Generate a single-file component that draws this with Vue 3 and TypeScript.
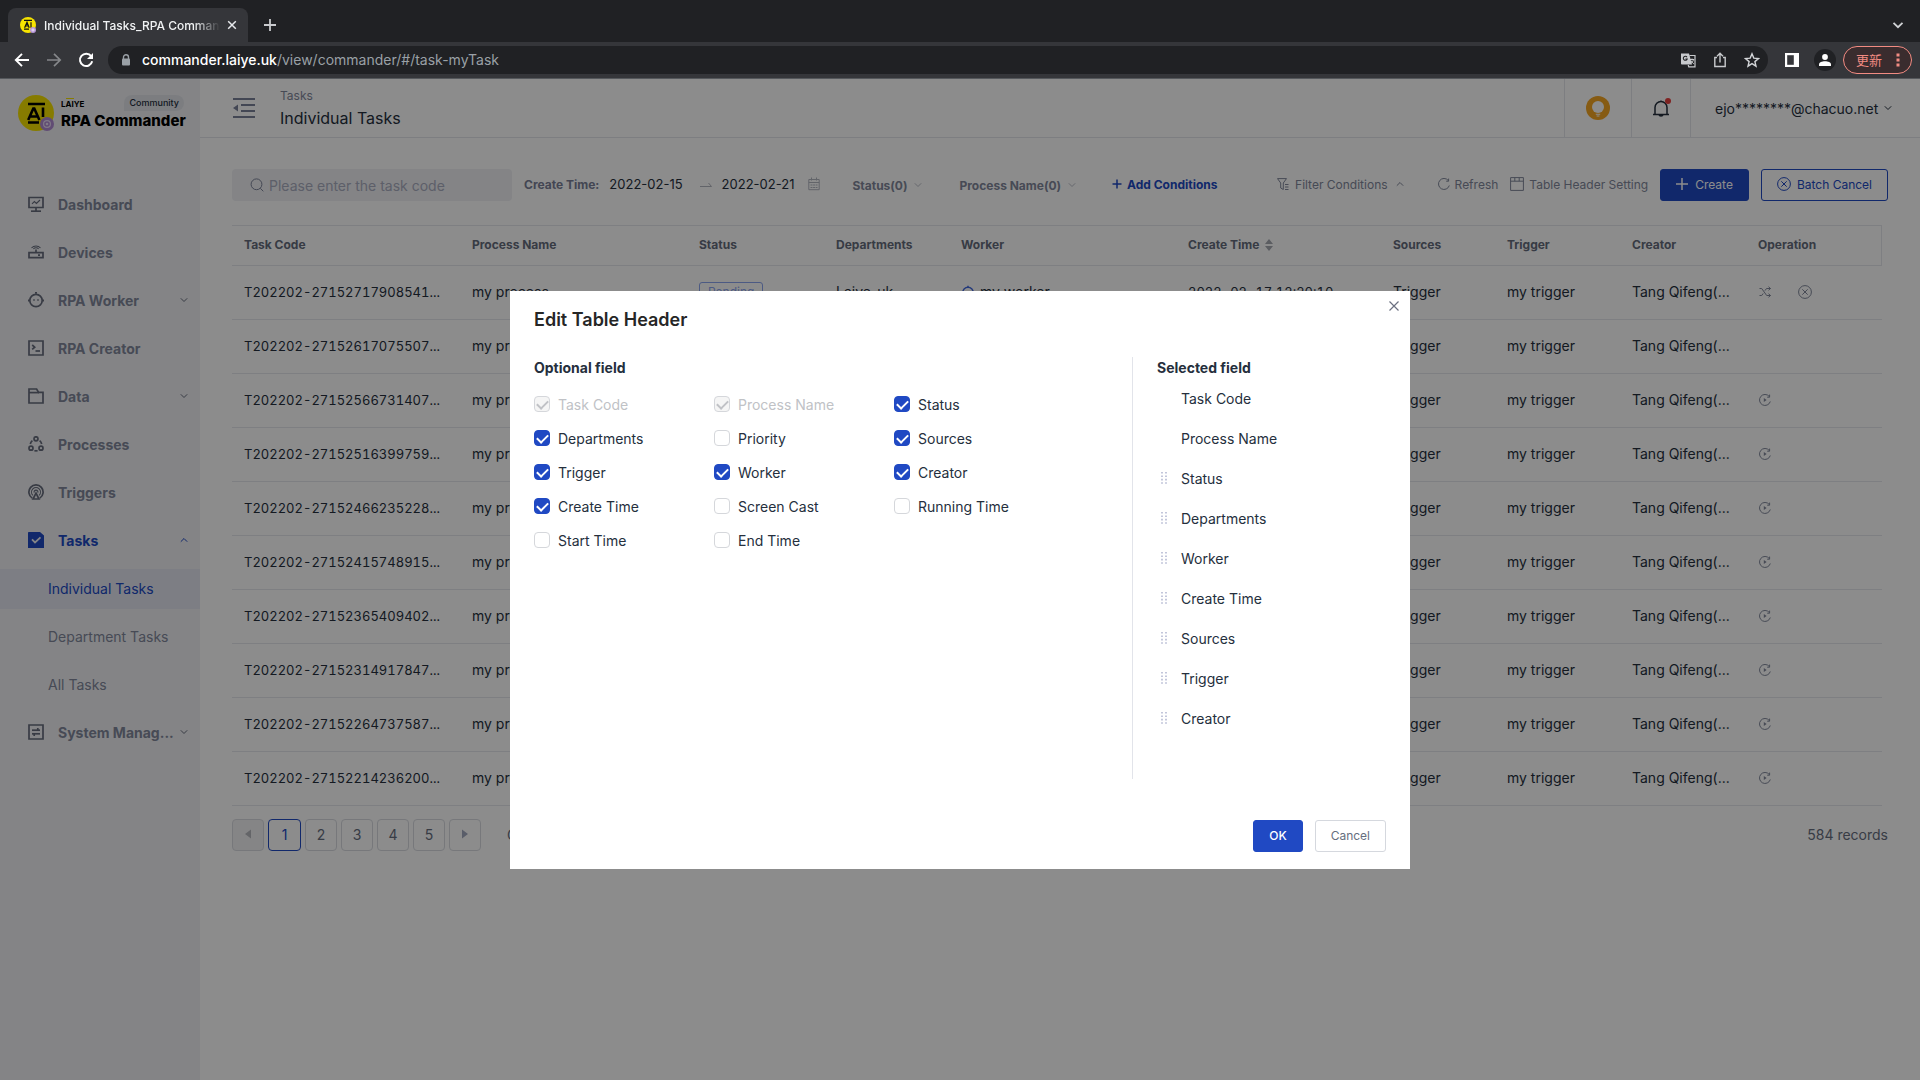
<script setup lang="ts">
import { ref } from 'vue'

interface MenuItem {
  label: string
  icon: string[]
  thin?: string[]
  arrow?: 'down' | 'up'
  active?: boolean
  children?: { label: string; active?: boolean }[]
}

const menu: MenuItem[] = [
  { label: 'Dashboard', icon: ['M1 1.5h14v10H1z', 'M8 12v3', 'M3 15.2h10'], thin: ['M4 7.8l2.4-2.2 2 1.8L12 4'] },
  { label: 'Devices', icon: ['M1 8.6h14v5H1z', 'M8 5.5v3', 'M10 11.2h2'], thin: ['M3.5 4a6 6 0 0 1 9 0', 'M5.4 5a3.4 3.4 0 0 1 5.2 0'] },
  { label: 'RPA Worker', icon: ['M8 2.3a6.2 6.2 0 1 1 0 12.4A6.2 6.2 0 0 1 8 2.3z', 'M7 .8h2', 'M.6 7.5v2', 'M15.4 7.5v2'], thin: ['M6 7v2', 'M10 7v2'], arrow: 'down' },
  { label: 'RPA Creator', icon: ['M1 1h14v14H1z', 'M4.2 5l2.5 2.2L4.2 9.4', 'M7.5 11h4.5'] },
  { label: 'Data', icon: ['M1 15V1h7.6l2 3.4H15V15z', 'M1 4.6h10'], arrow: 'down' },
  {
    label: 'Processes',
    icon: ['M8 .8a2 2 0 1 1 0 4 2 2 0 0 1 0-4z', 'M3 10.2a2 2 0 1 1 0 4 2 2 0 0 1 0-4z', 'M13 10.2a2 2 0 1 1 0 4 2 2 0 0 1 0-4z', 'M4.4 4.6A6 6 0 0 0 2.3 8', 'M11.6 4.6A6 6 0 0 1 13.7 8', 'M6.4 14.8h3.2'],
  },
  {
    label: 'Triggers',
    icon: ['M4.2 14A7.1 7.1 0 1 1 11.8 14', 'M8 9.2l-3 5.8h6z'],
    thin: ['M4.8 11.3a4.5 4.5 0 1 1 6.4 0', 'M6.2 8.6a1.9 1.9 0 1 1 3.6 0'],
  },
  {
    label: 'Tasks',
    icon: [],
    arrow: 'up',
    active: true,
    children: [{ label: 'Individual Tasks', active: true }, { label: 'Department Tasks' }, { label: 'All Tasks' }],
  },
  { label: 'System Manag...', icon: ['M1 1h14v14H1z', 'M4 6.2h8', 'M9.8 4v2.2', 'M4 9.8h8', 'M6.2 9.8v2.2'], arrow: 'down' },
]

const columns = [
  { key: 'code', label: 'Task Code', width: 228 },
  { key: 'process', label: 'Process Name', width: 227 },
  { key: 'status', label: 'Status', width: 137 },
  { key: 'dept', label: 'Departments', width: 125 },
  { key: 'worker', label: 'Worker', width: 227 },
  { key: 'time', label: 'Create Time', width: 205 },
  { key: 'source', label: 'Sources', width: 114 },
  { key: 'trigger', label: 'Trigger', width: 125 },
  { key: 'creator', label: 'Creator', width: 126 },
  { key: 'operation', label: 'Operation', width: 136 },
]

type Operation = 'pending' | 'none' | 'rerun'
const codes = [
  '27152717908541', '27152617075507', '27152566731407', '27152516399759', '27152466235228',
  '27152415748915', '27152365409402', '27152314917847', '27152264737587', '27152214236200',
]
const rows = codes.map((code, i) => ({
  code: `T202202-${code}...`,
  pending: i === 0,
  operation: (i === 0 ? 'pending' : i === 1 ? 'none' : 'rerun') as Operation,
}))

const fields = ref([
  { name: 'Task Code', checked: true, locked: true },
  { name: 'Process Name', checked: true, locked: true },
  { name: 'Status', checked: true, locked: false },
  { name: 'Departments', checked: true, locked: false },
  { name: 'Priority', checked: false, locked: false },
  { name: 'Sources', checked: true, locked: false },
  { name: 'Trigger', checked: true, locked: false },
  { name: 'Worker', checked: true, locked: false },
  { name: 'Creator', checked: true, locked: false },
  { name: 'Create Time', checked: true, locked: false },
  { name: 'Screen Cast', checked: false, locked: false },
  { name: 'Running Time', checked: false, locked: false },
  { name: 'Start Time', checked: false, locked: false },
  { name: 'End Time', checked: false, locked: false },
])

const selected = ['Task Code', 'Process Name', 'Status', 'Departments', 'Worker', 'Create Time', 'Sources', 'Trigger', 'Creator']
const pages = [1, 2, 3, 4, 5]
const keyword = ref('')
</script>

<template>
  <div class="window">
    <header class="browser">
      <div class="tabs">
        <div class="tab">
          <svg class="i16" viewBox="0 0 16 16"><circle cx="8" cy="8" r="8" fill="#f7e400" /><path d="M4 3.4h8M4 12.2h5M4.6 10.8L7 5.4l2.2 5.4M5.4 9h3M11 5.2v5.6" stroke="#111" stroke-width="1.2" fill="none" /><circle cx="13" cy="13" r="3" fill="#b796d8" /><circle cx="13" cy="13" r="1.1" fill="none" stroke="#fff" stroke-width=".7" /></svg>
          <span class="tab-title">Individual Tasks_RPA Commander</span>
          <button class="bare" aria-label="Close tab"><svg class="i12" viewBox="0 0 12 12"><path d="M2.2 2.2l7.6 7.6M9.8 2.2L2.2 9.8" stroke="#e8eaed" stroke-width="1.5" /></svg></button>
        </div>
        <button class="bare new-tab" aria-label="New tab"><svg class="i12" viewBox="0 0 12 12"><path d="M6 0v12M0 6h12" stroke="#c9cbce" stroke-width="1.8" /></svg></button>
        <button class="bare tab-search" aria-label="Search tabs"><svg class="i12" viewBox="0 0 12 12"><path d="M1.5 3.8L6 8.2l4.5-4.4" stroke="#d0d2d5" stroke-width="1.8" fill="none" /></svg></button>
      </div>
      <div class="toolbar">
        <button class="bare" aria-label="Back"><svg class="i16" viewBox="0 0 16 16"><path d="M15 8H2M8 1.8L1.8 8 8 14.2" stroke="#fff" stroke-width="1.9" fill="none" /></svg></button>
        <button class="bare" aria-label="Forward"><svg class="i16" viewBox="0 0 16 16"><path d="M1 8h13M8 1.8L14.2 8 8 14.2" stroke="#85878a" stroke-width="1.7" fill="none" /></svg></button>
        <button class="bare" aria-label="Reload"><svg class="i16" viewBox="0 0 16 16"><path d="M13.2 4.2A6.2 6.2 0 1 0 14.2 9.3" stroke="#fff" stroke-width="2" fill="none" /><path d="M15 1v6H9z" fill="#fff" /></svg></button>
        <div class="address">
          <svg class="lock" viewBox="0 0 10 12"><path d="M2.5 5V3.2a2.5 2.5 0 0 1 5 0V5" stroke="#9aa0a6" stroke-width="1.4" fill="none" /><rect x="1" y="4.6" width="8" height="7" rx="1" fill="#9aa0a6" /></svg>
          <span class="url"><b>commander.laiye.uk</b>/view/commander/#/task-myTask</span>
          <span class="address-icons">
            <svg class="i16" viewBox="0 0 16 16"><path d="M1 1.5h8l3 11H1.8a.8.8 0 0 1-.8-.8z" fill="#c8cacd" /><path d="M9.5 3.5H15v11.3H8.8L8.2 13" stroke="#c8cacd" stroke-width="1.2" fill="none" /><path d="M7 5.2a2 2 0 1 0 .2 1.8H5.4" stroke="#202124" stroke-width="1.1" fill="none" /><path d="M9.8 7.5h4.4M12 6.5v1M13.5 7.5c-.3 1.8-1.5 3-2.7 4M11 8.5c.5 1.3 1.7 2.5 2.8 3.3" stroke="#c8cacd" fill="none" /></svg>
            <svg class="i16" viewBox="0 0 16 16"><path d="M5 5.5H2.8v9h10.4v-9H11M8 10.5V1.5M5 4.2l3-3 3 3" stroke="#c8cacd" stroke-width="1.4" fill="none" /></svg>
            <svg class="i16" viewBox="0 0 16 16"><path d="M8 1.8l1.8 4.3 4.7.4-3.6 3.1 1.1 4.6L8 11.7l-4 2.5 1.1-4.6L1.5 6.5l4.7-.4z" stroke="#d4d6d9" stroke-width="1.4" fill="none" /></svg>
          </span>
        </div>
        <button class="bare panel" aria-label="Side panel"><svg class="i16" viewBox="0 0 16 16"><path d="M1 1h14v14H1z" fill="#fff" /><path d="M3.2 3.2h6.6v9.6H3.2z" fill="#35363a" /></svg></button>
        <button class="bare avatar" aria-label="Profile"><svg class="i12" viewBox="0 0 12 12"><circle cx="6" cy="3" r="2.9" fill="#fff" /><path d="M0 12V10.5C0 8.3 3 7.3 6 7.3s6 1 6 3.2V12z" fill="#fff" /></svg></button>
        <button class="update">更新<svg class="dots" viewBox="0 0 4 14"><path d="M.5.5h3v3h-3zM.5 5.5h3v3h-3zM.5 10.5h3v3h-3z" fill="#f28b82" /></svg></button>
      </div>
    </header>

    <div class="page">
      <aside class="sidebar">
        <div class="logo">
          <svg class="logo-mark" viewBox="0 0 36 36"><circle cx="18" cy="18" r="18" fill="#f5e100" /><path d="M10 9h17M10 27.5h11" stroke="#000" stroke-width="2.6" /><path d="M10.2 25L15.3 13.5h1L21.4 25M12.2 21.5h7.2M25 12.5V22" stroke="#000" stroke-width="2.6" fill="none" /><circle cx="29" cy="29" r="7" fill="#b18bd3" /><circle cx="29" cy="29" r="3.4" stroke="#e9dcf5" stroke-width="1.2" fill="none" /><circle cx="29" cy="29" r="1.3" fill="#e9dcf5" /></svg>
          <div class="logo-text">
            <div class="logo-top"><span class="laiye">L<i>AI</i>YE</span><span class="edition">Community</span></div>
            <strong class="product">RPA Commander</strong>
          </div>
        </div>
        <nav class="menu">
          <template v-for="item in menu" :key="item.label">
            <a href="#" class="menu-item" :class="{ active: item.active }">
              <svg v-if="item.active" class="i16" viewBox="0 0 16 16"><path d="M0 .8A.8.8 0 0 1 .8 0H12l4 3.6V16H0z" fill="#2049c3" /><path d="M4 7.4l3 3 5.5-5" stroke="#f0f1f5" stroke-width="1.8" fill="none" /></svg>
              <svg v-else class="i16" viewBox="0 0 16 16" fill="none" stroke="currentColor">
                <path v-for="d in item.icon" :key="d" :d="d" stroke-width="1.7" />
                <path v-for="d in item.thin" :key="d" :d="d" stroke-width="1.1" />
              </svg>
              <span class="menu-label">{{ item.label }}</span>
              <svg v-if="item.arrow" class="chev" :class="item.arrow" viewBox="0 0 8 8"><path d="M.8 2.3L4 5.5l3.2-3.2" /></svg>
            </a>
            <a v-for="child in item.children" :key="child.label" href="#" class="submenu-item" :class="{ active: child.active }">{{ child.label }}</a>
          </template>
        </nav>
      </aside>

      <main class="main">
        <header class="topbar">
          <button class="bare fold" aria-label="Collapse menu"><svg viewBox="0 0 22 20"><path d="M0 1h22M8 7h14M8 13h14M0 19h22" stroke="#7b829a" stroke-width="1.8" /><path d="M5 6.5v7L0 10z" fill="#7b829a" /></svg></button>
          <div class="crumbs"><span class="crumb">Tasks</span><h1>Individual Tasks</h1></div>
          <div class="top-cell tips"><svg viewBox="0 0 24 24"><circle cx="12" cy="12" r="12" fill="#f5a623" /><circle cx="12" cy="11" r="6" fill="#fff" /><path d="M9.8 17.8h4.4v1H9.8zM10.6 19.6h2.8v1h-2.8z" fill="#fff" /></svg></div>
          <div class="top-cell bell"><svg viewBox="0 0 20 20"><path d="M2 16.5h16M4 16.5V9.5a6 6 0 0 1 12 0v7M10 3.5v-1" stroke="#252f3d" stroke-width="1.5" fill="none" /><path d="M7.5 17h5a2.5 1.8 0 0 1-5 0z" fill="#252f3d" /><circle cx="17" cy="3" r="3" fill="#e8403f" /></svg></div>
          <button class="bare account">ejo********@chacuo.net<svg class="chev" viewBox="0 0 8 8"><path d="M.8 2.3L4 5.5l3.2-3.2" /></svg></button>
        </header>

        <section class="content">
          <div class="filters">
            <label class="search">
              <svg viewBox="0 0 14 14"><circle cx="6.5" cy="6.3" r="5.4" fill="none" stroke="#7d8399" /><path d="M10.3 10.3l3 3" stroke="#7d8399" /></svg>
              <input v-model="keyword" type="text" placeholder="Please enter the task code" aria-label="Task code" />
            </label>
            <div class="range">
              <b>Create Time:</b><span class="date">2022-02-15</span>
              <svg class="range-arrow" viewBox="0 0 12 8"><path d="M0 6.5h11.5L8.5 3" stroke="#b3b6c0" fill="none" /></svg>
              <span class="date">2022-02-21</span>
              <svg class="calendar" viewBox="0 0 12 14"><path d="M.8 2.5h10.4v10.2H.8zM.8 5.5h10.4M3.5.5v3M8.5.5v3" stroke="#b3b6c0" fill="none" /><path d="M2.5 8h7M2.5 10.5h7" stroke="#b3b6c0" stroke-dasharray="2 .6" /></svg>
            </div>
            <button class="bare drop status-drop">Status(0)<svg class="chev pale" viewBox="0 0 8 8"><path d="M.8 2.3L4 5.5l3.2-3.2" /></svg></button>
            <button class="bare drop">Process Name(0)<svg class="chev pale" viewBox="0 0 8 8"><path d="M.8 2.3L4 5.5l3.2-3.2" /></svg></button>
            <button class="bare add"><svg viewBox="0 0 10 10"><path d="M5 .5v9M.5 5h9" stroke="currentColor" stroke-width="1.5" /></svg>Add Conditions</button>
            <div class="actions">
              <button class="bare tool filter-tool"><svg class="i12" viewBox="0 0 12 12"><path d="M.5.6h9L6.3 5v6.5L3.7 10V5zM8 6.5h3.5M8 9h3.5M8 11.5h3.5" stroke="currentColor" fill="none" /></svg>Filter Conditions<svg class="chev up" viewBox="0 0 8 8"><path d="M.8 2.3L4 5.5l3.2-3.2" /></svg></button>
              <button class="bare tool"><svg class="i12" viewBox="0 0 12 12"><path d="M10.3 2.5A5.5 5.5 0 1 0 11.3 7.5M10.6.6v2.6H8.2" stroke="currentColor" fill="none" /></svg>Refresh</button>
              <button class="bare tool"><svg class="i14" viewBox="0 0 14 14"><path d="M.6.6h12.8v12.8H.6zM.6 4.2h12.8M4.8.6v3.6M9.2.6v3.6" stroke="currentColor" fill="none" /></svg>Table Header Setting</button>
              <button class="btn primary create"><svg class="i12" viewBox="0 0 12 12"><path d="M6 0v12M0 6h12" stroke="currentColor" stroke-width="1.5" /></svg>Create</button>
              <button class="btn ghost"><svg class="i14" viewBox="0 0 14 14"><circle cx="7" cy="7" r="6.4" /><path d="M4.3 4.3l5.4 5.4M9.7 4.3L4.3 9.7" /></svg>Batch Cancel</button>
            </div>
          </div>

          <div class="table-wrap">
            <table>
              <colgroup><col v-for="c in columns" :key="c.key" :style="{ width: c.width + 'px' }" /></colgroup>
              <thead>
                <tr>
                  <th v-for="c in columns" :key="c.key" scope="col">{{ c.label }}<svg v-if="c.key === 'time'" class="sorter" viewBox="0 0 8 14"><path d="M4 1l4 5H0zM4 13L0 8h8z" fill="#a6a9b1" /></svg></th>
                </tr>
              </thead>
              <tbody>
                <tr v-for="row in rows" :key="row.code">
                  <td class="digits">{{ row.code }}</td>
                  <td>my process</td>
                  <td><span v-if="row.pending" class="tag">Pending</span></td>
                  <td><span v-if="row.pending">Laiye_uk</span></td>
                  <td><template v-if="row.pending"><svg class="bot" viewBox="0 0 16 16"><circle cx="8" cy="8.5" r="6" /><path d="M8 .8v2M.8 7.5v2M15.2 7.5v2" /></svg>my worker</template></td>
                  <td class="digits"><span v-if="row.pending">2022-02-17 12:20:10</span></td>
                  <td>Trigger</td>
                  <td>my trigger</td>
                  <td>Tang Qifeng(...</td>
                  <td>
                    <div class="ops">
                      <template v-if="row.operation === 'pending'">
                        <button class="bare" aria-label="Reassign"><svg class="i12" viewBox="0 0 12 12"><path d="M.5 2.5h2.2l5 7h3.8M.5 9.5h2.2l1.5-2M6 4.6l1.5-2.1h4M9.5.7l2 1.8-2 1.8M9.5 7.7l2 1.8-2 1.8" /></svg></button>
                        <button class="bare" aria-label="Cancel task"><svg class="i14" viewBox="0 0 14 14"><circle cx="7" cy="7" r="6.4" /><path d="M4.3 4.3l5.4 5.4M9.7 4.3L4.3 9.7" /></svg></button>
                      </template>
                      <button v-else-if="row.operation === 'rerun'" class="bare" aria-label="Run again"><svg class="i12" viewBox="0 0 12 12"><path d="M10.3 2.5A5.5 5.5 0 1 0 11.3 7.5M10.6.6v2.6H8.2" /><path d="M4.8 4v4L7.6 6z" class="solid" /></svg></button>
                    </div>
                  </td>
                </tr>
              </tbody>
            </table>
          </div>

          <footer class="pager">
            <button class="page-btn disabled" disabled aria-label="Previous page"><svg viewBox="0 0 6 10"><path d="M6 .5v9L0 5z" fill="#b6b8be" /></svg></button>
            <button v-for="p in pages" :key="p" class="page-btn" :class="{ current: p === 1 }">{{ p }}</button>
            <button class="page-btn" aria-label="Next page"><svg viewBox="0 0 6 10"><path d="M0 .5v9L6 5z" fill="#a3a9bf" /></svg></button>
            <span class="goto">Go to</span>
            <span class="records">584 records</span>
          </footer>
        </section>
      </main>

      <div class="mask">
        <div class="modal" role="dialog" aria-labelledby="modal-title">
          <button class="bare close" aria-label="Close"><svg viewBox="0 0 10 10"><path d="M.5.5l9 9M9.5.5l-9 9" stroke="#6b7080" stroke-width="1.2" /></svg></button>
          <h2 id="modal-title">Edit Table Header</h2>
          <div class="modal-body">
            <section class="optional">
              <h3>Optional field</h3>
              <div class="grid">
                <label v-for="f in fields" :key="f.name" class="check" :class="{ locked: f.locked }">
                  <input v-model="f.checked" type="checkbox" :disabled="f.locked" />{{ f.name }}
                </label>
              </div>
            </section>
            <section class="selected">
              <h3>Selected field</h3>
              <ul>
                <li v-for="(s, i) in selected" :key="s">
                  <svg v-if="i > 1" class="grip" viewBox="0 0 6 12"><path d="M1 0v12M5 0v12" stroke="#b4b9d2" stroke-width="1.6" stroke-dasharray="1.6 1.8" /></svg>
                  <span v-else class="grip"></span>{{ s }}
                </li>
              </ul>
            </section>
          </div>
          <footer class="modal-foot">
            <button class="btn primary ok">OK</button>
            <button class="btn plain">Cancel</button>
          </footer>
        </div>
      </div>
    </div>
  </div>
</template>

<style>
body {
  background: #fff;
}
</style>

<style scoped>
.window {
  display: flex;
  flex-direction: column;
  min-height: 100vh;
  font-family: Inter, 'Noto Sans CJK SC', sans-serif;
  font-size: 14px;
  color: #252f3d;
}
.window * {
  box-sizing: border-box;
}
svg {
  display: block;
  flex: none;
}
a {
  text-decoration: none;
}
button,
input {
  font-family: inherit;
}
.bare {
  display: flex;
  align-items: center;
  padding: 0;
  border: 0;
  background: none;
}
.i16 {
  width: 16px;
  height: 16px;
}
.i14 {
  width: 14px;
  height: 14px;
}
.i12 {
  width: 12px;
  height: 12px;
}
.chev {
  width: 8px;
  height: 8px;
  fill: none;
  stroke: currentColor;
}
.chev.up {
  transform: rotate(180deg);
}
.chev.pale {
  stroke: #b9bcc6;
}

/* browser frame */
.browser {
  background: #202124;
}
.tabs {
  display: flex;
  align-items: center;
  height: 42px;
  padding: 8px 16px 0 8px;
}
.tab {
  display: flex;
  align-items: center;
  width: 240px;
  height: 34px;
  padding: 0 10px 0 12px;
  border-radius: 8px 8px 0 0;
  background: #35363a;
}
.tab-title {
  flex: 1;
  margin: 0 6px 0 8px;
  overflow: hidden;
  white-space: nowrap;
  font-size: 12px;
  font-weight: 500;
  color: #f1f3f4;
  mask-image: linear-gradient(to right, #000 85%, transparent);
}
.new-tab {
  margin-left: 16px;
}
.tab-search {
  margin-left: auto;
}
.toolbar {
  display: flex;
  align-items: center;
  gap: 16px;
  height: 37px;
  padding: 0 8px 1px 14px;
  border-bottom: 1px solid #55585c;
  background: #35363a;
}
.address {
  display: flex;
  flex: 1;
  align-items: center;
  height: 28px;
  margin-left: -2px;
  padding: 0 8px 0 13px;
  border-radius: 14px;
  background: #202124;
}
.lock {
  width: 10px;
  height: 12px;
}
.url {
  margin-left: 11px;
  color: #9aa0a6;
}
.url b {
  font-weight: 500;
  color: #fff;
}
.address-icons {
  display: flex;
  gap: 16px;
  margin-left: auto;
}
.panel {
  margin-right: -2px;
}
.avatar {
  justify-content: center;
  width: 22px;
  height: 22px;
  border-radius: 50%;
  background: #202124;
}
.update {
  display: flex;
  align-items: center;
  justify-content: space-between;
  width: 69px;
  height: 28px;
  margin-left: -9px;
  padding: 0 11px 0 12px;
  border: 1px solid #f28b82;
  border-radius: 14px;
  background: #3a2c2e;
  font-size: 13px;
  color: #f28b82;
}
.dots {
  width: 4px;
  height: 14px;
}

/* application */
.page {
  position: relative;
  display: flex;
  flex: 1;
}
.sidebar {
  width: 200px;
  flex: none;
  background: #f0f1f5;
}
.logo {
  display: flex;
  gap: 7px;
  padding: 16px 0 0 18px;
}
.logo-mark {
  width: 36px;
  height: 36px;
}
.logo-text {
  flex: 1;
}
.logo-top {
  display: flex;
  align-items: center;
  justify-content: space-between;
  height: 16px;
  padding-right: 16px;
}
.laiye {
  padding-top: 2px;
  font-size: 8px;
  line-height: 10px;
  font-weight: 700;
  color: #000;
}
.laiye i {
  border-top: 1px solid #f5e100;
  font-style: normal;
}
.edition {
  padding: 0 5px;
  border-radius: 8px 8px 8px 0;
  background: #e2e4ea;
  font-size: 9px;
  line-height: 16px;
  font-weight: 500;
}
.product {
  display: block;
  font-size: 15px;
  line-height: 20px;
  font-weight: 800;
  color: #000;
  white-space: nowrap;
}
.menu {
  display: flex;
  flex-direction: column;
  gap: 8px;
  padding-top: 54px;
}
.menu-item {
  display: flex;
  align-items: center;
  height: 40px;
  padding: 0 12px 2px 28px;
  color: #666c7c;
}
.menu-label {
  flex: 1;
  margin-left: 14px;
  font-weight: 700;
  color: #81889b;
  white-space: nowrap;
}
.menu-item.active,
.menu-item.active .menu-label,
.submenu-item.active {
  color: #2049c3;
}
.submenu-item {
  height: 40px;
  padding-left: 48px;
  line-height: 40px;
  color: #81889b;
}
.submenu-item.active {
  background: #e3e6f1;
}
.main {
  display: flex;
  flex: 1;
  flex-direction: column;
  min-width: 0;
}
.topbar {
  display: flex;
  align-items: center;
  height: 59px;
  padding-left: 33px;
  border-bottom: 1px solid #e4e6ec;
}
.fold svg {
  width: 22px;
  height: 20px;
}
.crumbs {
  flex: 1;
  margin-left: 25px;
}
.crumb {
  display: block;
  font-size: 12px;
  line-height: 20px;
  color: #81889b;
}
h1 {
  margin: 0;
  font-size: 16px;
  line-height: 24px;
  font-weight: 400;
}
.top-cell {
  display: flex;
  align-items: center;
  justify-content: center;
  height: 100%;
  border-left: 1px solid #e4e6ec;
}
.tips {
  width: 67px;
}
.tips svg {
  width: 24px;
  height: 24px;
}
.bell {
  width: 59px;
}
.bell svg {
  width: 20px;
  height: 20px;
}
.account {
  gap: 6px;
  width: 230px;
  height: 100%;
  padding-left: 24px;
  border-left: 1px solid #e4e6ec;
  font-size: 14px;
  color: #252f3d;
}
.content {
  padding: 31px 32px 0;
}
.filters {
  display: flex;
  align-items: center;
  height: 32px;
  font-size: 12px;
  white-space: nowrap;
}
.search {
  display: flex;
  align-items: center;
  gap: 5px;
  width: 280px;
  height: 32px;
  padding: 0 18px;
  border-radius: 4px;
  background: #f0f1f5;
}
.search svg {
  width: 14px;
  height: 14px;
}
.search input {
  flex: 1;
  min-width: 0;
  padding: 0;
  border: 0;
  outline: 0;
  background: none;
  font-size: 14px;
}
.search input::placeholder {
  color: #a9adc0;
}
.range {
  display: flex;
  align-items: center;
  margin-left: 12px;
  padding-bottom: 2px;
}
.range b {
  margin-right: 10px;
  font-weight: 700;
  color: #7a8097;
}
.date {
  font-size: 13px;
}
.range-arrow {
  width: 12px;
  height: 8px;
  margin: 0 10px 0 17px;
}
.calendar {
  width: 12px;
  height: 14px;
  margin-left: 14px;
}
.drop {
  gap: 7px;
  font-size: 12px;
  font-weight: 700;
  color: #81889b;
}
.status-drop {
  margin: 0 37px 0 32px;
}
.add {
  gap: 5px;
  margin-left: 36px;
  padding-bottom: 2px;
  font-size: 12px;
  font-weight: 700;
  color: #2049c3;
}
.add svg {
  width: 10px;
  height: 10px;
}
.actions {
  display: flex;
  align-items: center;
  margin-left: auto;
}
.tool {
  gap: 5px;
  margin-right: 12px;
  padding-bottom: 2px;
  font-size: 12px;
  color: #81889b;
}
.filter-tool {
  gap: 6px;
  margin-right: 34px;
}
.filter-tool .chev {
  margin-left: 2px;
}
.btn {
  display: flex;
  align-items: center;
  justify-content: center;
  gap: 6px;
  height: 32px;
  padding: 0 15px 2px;
  border: 1px solid #2049c3;
  border-radius: 3px;
  background: none;
  font-size: 12px;
}
.primary {
  background: #2049c3;
  color: #fff;
}
.create {
  gap: 7px;
  margin-right: 12px;
}
.ghost {
  color: #2049c3;
}
.ghost svg,
.ops svg {
  fill: none;
  stroke: currentColor;
}
.plain {
  border-color: #d5d8de;
  color: #666e7e;
}
.table-wrap {
  margin-top: 24px;
  padding-right: 6px;
}
table {
  width: 100%;
  table-layout: fixed;
  border-spacing: 0;
}
th {
  height: 41px;
  padding: 0 12px 2px;
  border-top: 1px solid #e6e8ed;
  border-bottom: 1px solid #e6e8ed;
  text-align: left;
  font-size: 12px;
  font-weight: 700;
  color: #656c7c;
}
th:last-child {
  border-right: 1px solid #e6e8ed;
}
td {
  height: 54px;
  padding: 0 12px 2px;
  border-bottom: 1px solid #e6e8ed;
  white-space: nowrap;
}
.digits {
  font-size: 13px;
  font-variant-numeric: tabular-nums;
}
.sorter {
  display: inline-block;
  width: 8px;
  height: 14px;
  margin-left: 6px;
  vertical-align: middle;
}
.tag {
  display: inline-block;
  padding: 0 8px;
  border: 1px solid #8ba4ee;
  border-radius: 3px;
  font-size: 12px;
  line-height: 18px;
  color: #8ba4ee;
}
.bot {
  display: inline-block;
  width: 14px;
  height: 14px;
  margin-right: 5px;
  vertical-align: -2px;
  fill: none;
  stroke: #4068df;
  stroke-width: 1.6;
}
.ops {
  display: flex;
  gap: 27px;
  padding-left: 1px;
  color: #81889b;
}
.ops button {
  color: inherit;
}
.ops .solid {
  fill: currentColor;
  stroke: none;
}
.pager {
  display: flex;
  align-items: center;
  gap: 4px;
  margin-top: 13px;
  color: #666e7e;
}
.page-btn {
  display: flex;
  align-items: center;
  justify-content: center;
  width: 32px;
  height: 32px;
  padding: 0 0 2px;
  border: 1px solid #d9dbe1;
  border-radius: 4px;
  background: none;
  font-size: 14px;
  color: #666e7e;
}
.page-btn svg {
  width: 6px;
  height: 10px;
}
.page-btn.disabled {
  background: #f3f3f4;
}
.page-btn.current {
  width: 33px;
  border-color: #2049c3;
  color: #2049c3;
}
.goto {
  margin-left: 22px;
}
.records {
  margin-left: auto;
}
.goto,
.records {
  padding-bottom: 2px;
}

/* dialog */
.mask {
  position: absolute;
  inset: 0;
  background: rgba(0, 0, 0, 0.45);
}
.modal {
  position: relative;
  width: 900px;
  margin: 212px auto 0;
  padding: 16px 24px 17px;
  background: #fff;
}
.close {
  position: absolute;
  top: 10px;
  right: 11px;
}
.close svg {
  width: 10px;
  height: 10px;
}
h2 {
  margin: 0 0 24px;
  font-size: 18px;
  line-height: 26px;
  font-weight: 600;
  color: #262626;
}
h3 {
  margin: 0;
  font-size: 14px;
  line-height: 22px;
  font-weight: 700;
}
.modal-body {
  display: flex;
}
.optional {
  flex: 1;
}
.grid {
  display: grid;
  grid-template-columns: repeat(3, 180px);
  gap: 12px 0;
  margin-top: 15px;
}
.check {
  display: flex;
  align-items: center;
  gap: 8px;
  line-height: 22px;
}
.check.locked {
  color: #c0c2c6;
}
.check input {
  display: flex;
  align-items: center;
  justify-content: center;
  width: 16px;
  height: 16px;
  margin: 0 0 2px;
  appearance: none;
  border: 1px solid #d5d7db;
  border-radius: 4px;
  background: #fff;
}
.check input:checked {
  border-color: #2049c3;
  background: #2049c3;
}
.check input:checked::after {
  content: '';
  width: 5px;
  height: 9px;
  margin-bottom: 2px;
  border: solid #fff;
  border-width: 0 2px 2px 0;
  transform: rotate(45deg);
}
.check input:disabled {
  border-color: #d5d7db;
  background: #f5f5f5;
}
.check input:disabled::after {
  border-color: #c0c2c6;
}
.selected {
  width: 254px;
  padding: 0 0 40px 24px;
  border-left: 1px solid #e2e4ea;
}
ul {
  margin: 0;
  padding: 0;
  list-style: none;
}
li {
  display: flex;
  align-items: center;
  height: 40px;
  padding-bottom: 2px;
}
.grip {
  width: 6px;
  height: 12px;
  margin: 0 14px 0 4px;
}
.modal-foot {
  display: flex;
  justify-content: flex-end;
  gap: 12px;
  margin-top: 41px;
}
.ok {
  font-weight: 500;
}
</style>
